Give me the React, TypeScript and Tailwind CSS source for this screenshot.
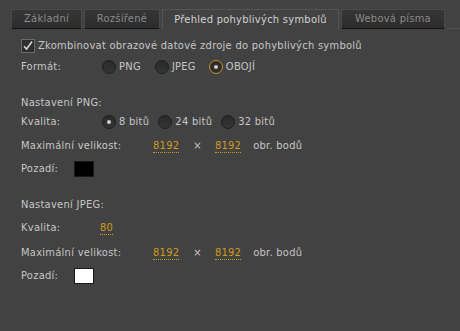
import React from "react";

const font = { fontFamily: '"DejaVu Sans Condensed", Tahoma, "Liberation Sans", sans-serif' };

function Radio({ checked, focus }: { checked?: boolean; focus?: boolean }) {
  return (
    <span
      className={`relative inline-flex items-center justify-center w-[14px] h-[14px] rounded-full border ${
        focus ? "border-[#c8901a]" : "border-[#1e1e1e]"
      } bg-gradient-to-b from-[#2a2a2a] to-[#353535] shrink-0`}
    >
      {focus && <span className="absolute inset-[1px] rounded-full border border-[#2a2a2a]" />}
      {checked && <span className="w-[4px] h-[4px] rounded-full bg-[#cfcfcf]" />}
    </span>
  );
}

function RadioItem({ label, checked, focus, className = "" }: { label: string; checked?: boolean; focus?: boolean; className?: string }) {
  return (
    <div className={`flex items-center gap-[3px] ${className}`}>
      <Radio checked={checked} focus={focus} />
      <span>{label}</span>
    </div>
  );
}

function Val({ children }: { children: React.ReactNode }) {
  return (
    <span className="text-[#d09a1e] border-b border-dotted border-[#d09a1e] leading-[13px]">{children}</span>
  );
}

function Tab({ label, active, w }: { label: string; active?: boolean; w: string }) {
  if (active) {
    return (
      <div className={`${w} h-[21px] -mb-px flex items-center justify-center border border-b-0 border-[#555555] bg-[#424242] text-[#d2d2d2]`}>
        {label}
      </div>
    );
  }
  return (
    <div className={`${w} h-[20px] flex items-center justify-center border border-[#4a4a4a] border-b-[#151515] bg-gradient-to-b from-[#363636] to-[#2c2c2c] text-[#8a8a8a]`}>
      {label}
    </div>
  );
}

export default function App() {
  return (
    <div className="w-[460px] h-[331px] bg-[#424242] text-[#c6c6c6] text-[11px] tracking-[0.28px] overflow-hidden" style={font}>
      <div className="flex items-end pt-[9px] pl-[11px] gap-[2px]">
        <Tab label="Základní" w="w-[71px]" />
        <Tab label="Rozšířené" w="w-[76px]" />
        <Tab label="Přehled pohyblivých symbolů" w="w-[177px]" active />
        <Tab label="Webová písma" w="w-[104px]" />
        <div className="flex-1 h-[1px] bg-[#505050]" />
      </div>
      <div className="pl-[21px] flex flex-col">
        <div className="h-[16px] mt-[9px] flex items-center gap-[3px]">
          <span className="w-[14px] h-[14px] border border-[#6a6a6a] bg-[#2e2e2e] flex items-center justify-center">
            <svg width="12" height="12" viewBox="0 0 12 12">
              <path d="M2 6.2 L4.6 9 L10 1.5" fill="none" stroke="#d8d8d8" strokeWidth="1.5" />
            </svg>
          </span>
          <span>Zkombinovat obrazové datové zdroje do pohyblivých symbolů</span>
        </div>
        <div className="h-[16px] mt-[5px] flex items-center">
          <span className="w-[81px]">Formát:</span>
          <RadioItem label="PNG" />
          <RadioItem label="JPEG" className="ml-[14px]" />
          <RadioItem label="OBOJÍ" checked focus className="ml-[13px]" />
        </div>
        <div className="h-[16px] mt-[20px] flex items-center">Nastavení PNG:</div>
        <div className="h-[16px] mt-[3px] flex items-center">
          <span className="w-[81px]">Kvalita:</span>
          <RadioItem label="8 bitů" checked />
          <RadioItem label="24 bitů" className="ml-[9px]" />
          <RadioItem label="32 bitů" className="ml-[9px]" />
        </div>
        <div className="h-[16px] mt-[8px] flex items-center">
          <span className="w-[132px]">Maximální velikost:</span>
          <Val>8192</Val>
          <span className="ml-[14px] mr-[13px]">×</span>
          <Val>8192</Val>
          <span className="ml-[12px]">obr. bodů</span>
        </div>
        <div className="h-[16px] mt-[7px] flex items-center">
          <span className="w-[53px]">Pozadí:</span>
          <span className="w-[20px] h-[16px] bg-black border border-[#1a1a1a]" />
        </div>
        <div className="h-[16px] mt-[20px] flex items-center">Nastavení JPEG:</div>
        <div className="h-[16px] mt-[7px] flex items-center">
          <span className="w-[79px]">Kvalita:</span>
          <Val>80</Val>
        </div>
        <div className="h-[16px] mt-[9px] flex items-center">
          <span className="w-[132px]">Maximální velikost:</span>
          <Val>8192</Val>
          <span className="ml-[14px] mr-[13px]">×</span>
          <Val>8192</Val>
          <span className="ml-[12px]">obr. bodů</span>
        </div>
        <div className="h-[16px] mt-[7px] flex items-center">
          <span className="w-[53px]">Pozadí:</span>
          <span className="w-[20px] h-[16px] bg-white border border-[#1a1a1a]" />
        </div>
      </div>
    </div>
  );
}
